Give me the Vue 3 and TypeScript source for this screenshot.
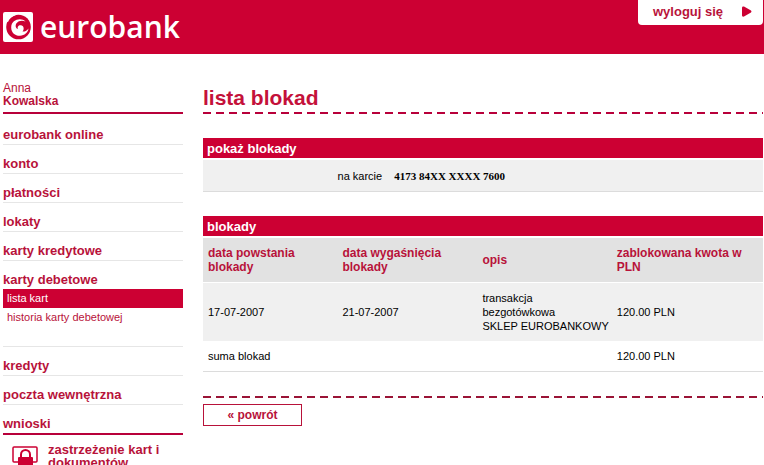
<script setup lang="ts">
interface MenuItem {
  label: string
  strong?: boolean
  children?: { label: string; active?: boolean }[]
}

interface Hold {
  created: string
  expires: string
  description: string[]
  amount: string
}

const menu: MenuItem[] = [
  { label: 'eurobank online' },
  { label: 'konto' },
  { label: 'płatności' },
  { label: 'lokaty' },
  { label: 'karty kredytowe' },
  {
    label: 'karty debetowe',
    children: [
      { label: 'lista kart', active: true },
      { label: 'historia karty debetowej' },
    ],
  },
  { label: 'kredyty' },
  { label: 'poczta wewnętrzna' },
  { label: 'wnioski', strong: true },
]

const holds: Hold[] = [
  {
    created: '17-07-2007',
    expires: '21-07-2007',
    description: ['transakcja', 'bezgotówkowa', 'SKLEP EUROBANKOWY'],
    amount: '120.00 PLN',
  },
]
</script>

<template>
  <div class="page">
    <header class="top">
      <a class="brand" href="#">
        <svg class="mark" viewBox="0 0 30 30" aria-hidden="true">
          <rect width="30" height="30" rx="2" fill="#fff" />
          <circle cx="15.5" cy="15" r="12.3" fill="#cc0033" />
          <path
            d="M2 9C5 4.500 10 2 14 2.500C9 4 6 7 5 10Z"
            fill="#fff"
          />
          <path
            d="M22.500 9.500C18 5.200 8.200 7.500 8.200 15.500C8.200 21 12.500 24 17 23.800C21.500 23.500 25 20.500 25.500 16.500C23.500 19.200 21 19.800 19.500 19.500C21.500 17.500 21 13.500 17.800 13.200C15.300 13 14 15.200 15 17C12.500 16.500 12 13.500 13.500 11.300C15.500 8.500 19.500 8.200 22.500 9.500Z"
            fill="#fff"
          />
        </svg>
        <span>eurobank</span>
      </a>
      <button class="logout" type="button">
        wyloguj się
        <svg viewBox="0 0 10 11" aria-hidden="true">
          <path d="M0 1.500Q0 0 2 .5L9 4.500Q10 5.500 9 6.500L2 10.500Q0 11 0 9.500Z" fill="#cc0033" />
        </svg>
      </button>
    </header>

    <div class="body">
      <aside class="side">
        <p class="user">Anna<br /><b>Kowalska</b></p>
        <nav>
          <ul class="menu">
            <li v-for="item in menu" :key="item.label" :class="{ strong: item.strong }">
              <a href="#">{{ item.label }}</a>
              <ul v-if="item.children" class="sub">
                <li v-for="child in item.children" :key="child.label">
                  <a href="#" :class="{ active: child.active }">{{ child.label }}</a>
                </li>
              </ul>
            </li>
          </ul>
        </nav>
        <a class="report" href="#">
          <svg viewBox="0 0 26 24" aria-hidden="true">
            <rect x="1" y="1" width="24" height="15" rx="1" fill="none" stroke="#cc0033" stroke-width="1.500" />
            <path d="M9 12V8.500a4.500 4.500 0 0 1 9 0V12" fill="#fff" stroke="#cc0033" stroke-width="2" />
            <rect x="6" y="11" width="15" height="12" rx="1" fill="#cc0033" />
          </svg>
          <span>zastrzeżenie kart i dokumentów</span>
        </a>
      </aside>

      <main class="content">
        <h1>lista blokad</h1>
        <div class="dashes"></div>

        <section class="card">
          <h2>pokaż blokady</h2>
          <dl class="filter">
            <dt>na karcie</dt>
            <dd>4173 84XX XXXX 7600</dd>
          </dl>
        </section>

        <section class="card">
          <h2>blokady</h2>
          <table>
            <thead>
              <tr>
                <th class="created">data powstania blokady</th>
                <th class="expires">data wygaśnięcia blokady</th>
                <th class="desc">opis</th>
                <th>zablokowana kwota w PLN</th>
              </tr>
            </thead>
            <tbody>
              <tr v-for="hold in holds" :key="hold.created">
                <td>{{ hold.created }}</td>
                <td>{{ hold.expires }}</td>
                <td><div v-for="line in hold.description" :key="line">{{ line }}</div></td>
                <td>{{ hold.amount }}</td>
              </tr>
            </tbody>
            <tfoot>
              <tr>
                <td colspan="3">suma blokad</td>
                <td>120.00 PLN</td>
              </tr>
            </tfoot>
          </table>
        </section>

        <div class="dashes dark"></div>
        <button class="back" type="button">« powrót</button>
      </main>
    </div>
  </div>
</template>

<style>
body {
  margin: 0;
  background: #fff;
}
</style>

<style scoped>
.page {
  height: 100vh;
  overflow: hidden;
  font-family: "Liberation Sans", Arial, sans-serif;
  font-size: 11px;
  line-height: 14px;
  color: #000;
}
a {
  color: inherit;
  text-decoration: none;
}
ul {
  list-style: none;
  margin: 0;
  padding: 0;
}
.top {
  display: flex;
  justify-content: space-between;
  align-items: flex-start;
  height: 54px;
  padding: 0 1px 0 3px;
  box-sizing: border-box;
  background: #cc0033;
}
.brand {
  display: flex;
  align-items: center;
  gap: 7px;
  height: 54px;
  color: #fff;
  font: 600 30px/40px "Open Sans", "Noto Sans", sans-serif;
}
.mark {
  width: 30px;
  height: 30px;
}
.logout {
  display: flex;
  align-items: center;
  justify-content: space-between;
  width: 125px;
  height: 25px;
  padding: 0 11px 2px 15px;
  border: 0;
  border-radius: 0 0 4px 4px;
  background: #fff;
  color: #b8123a;
  font: bold 13px/16px "Liberation Sans", Arial, sans-serif;
}
.logout svg {
  width: 10px;
  height: 11px;
}
.body {
  display: grid;
  grid-template-columns: 180px 1fr;
  column-gap: 20px;
  padding: 28px 1px 0 3px;
}
.user {
  margin: 0;
  padding-bottom: 4px;
  border-bottom: 2px solid #b8003a;
  color: #b8123a;
  font-size: 12px;
  line-height: 13px;
}
.menu {
  padding-top: 2px;
}
.menu > li {
  border-bottom: 1px solid #e6e6e6;
  color: #b8123a;
}
.menu > li > a {
  display: block;
  padding: 11px 0 1px;
  font-weight: bold;
  font-size: 13px;
  line-height: 16px;
}
.menu > li.strong {
  border-bottom: 2px solid #b8003a;
}
.sub {
  padding-bottom: 19px;
}
.sub a {
  display: block;
  padding: 2px 4px;
  line-height: 15px;
}
.sub .active {
  background: #cc0033;
  color: #fff;
}
.report {
  display: flex;
  gap: 10px;
  padding: 8px 0 0 9px;
  color: #b8123a;
  font-weight: bold;
  font-size: 13px;
  line-height: 13px;
}
.report svg {
  flex: none;
  width: 26px;
  height: 24px;
  margin-top: 3px;
}
h1 {
  margin: 0;
  padding: 4px 0 2px;
  color: #c4113a;
  font-size: 21px;
  line-height: 24px;
}
.dashes {
  height: 2px;
  background: repeating-linear-gradient(90deg, #b8003a 0 8px, transparent 8px 13px);
}
.dashes.dark {
  margin-top: 24px;
  background: repeating-linear-gradient(90deg, #9a1436 0 8px, transparent 8px 13px);
}
.card {
  margin-top: 24px;
}
h2 {
  margin: 0 0 2px;
  padding: 3px 4px 1px;
  background: #cc0033;
  color: #fff;
  font-size: 13px;
  line-height: 16px;
}
.filter {
  display: grid;
  grid-template-columns: 32% 1fr;
  column-gap: 12px;
  margin: 0;
  padding: 9px 0 8px;
  border-bottom: 1px solid #dcdcdc;
  background: #f0f0f0;
}
.filter dt {
  text-align: right;
}
.filter dd {
  margin: 0;
  font-family: "Liberation Serif", "Times New Roman", serif;
  font-weight: bold;
}
table {
  width: 100%;
  table-layout: fixed;
  border-spacing: 0;
}
th,
td {
  box-sizing: border-box;
  padding: 8px 0 8px 5px;
  text-align: left;
  vertical-align: middle;
}
th {
  border-bottom: 1px solid #fff;
  background: #e2e2e2;
  color: #b8123a;
  font-size: 12px;
}
.created {
  width: 24%;
}
.expires {
  width: 25%;
}
.desc {
  width: 24%;
}
tbody td {
  background: #f0f0f0;
}
tfoot td {
  border-bottom: 1px solid #dcdcdc;
}
.back {
  display: block;
  width: 99px;
  height: 22px;
  margin-top: 6px;
  padding: 0;
  border: 1px solid #b8123a;
  background: #fff;
  color: #b8123a;
  font: bold 12px/14px "Liberation Sans", Arial, sans-serif;
}
</style>
